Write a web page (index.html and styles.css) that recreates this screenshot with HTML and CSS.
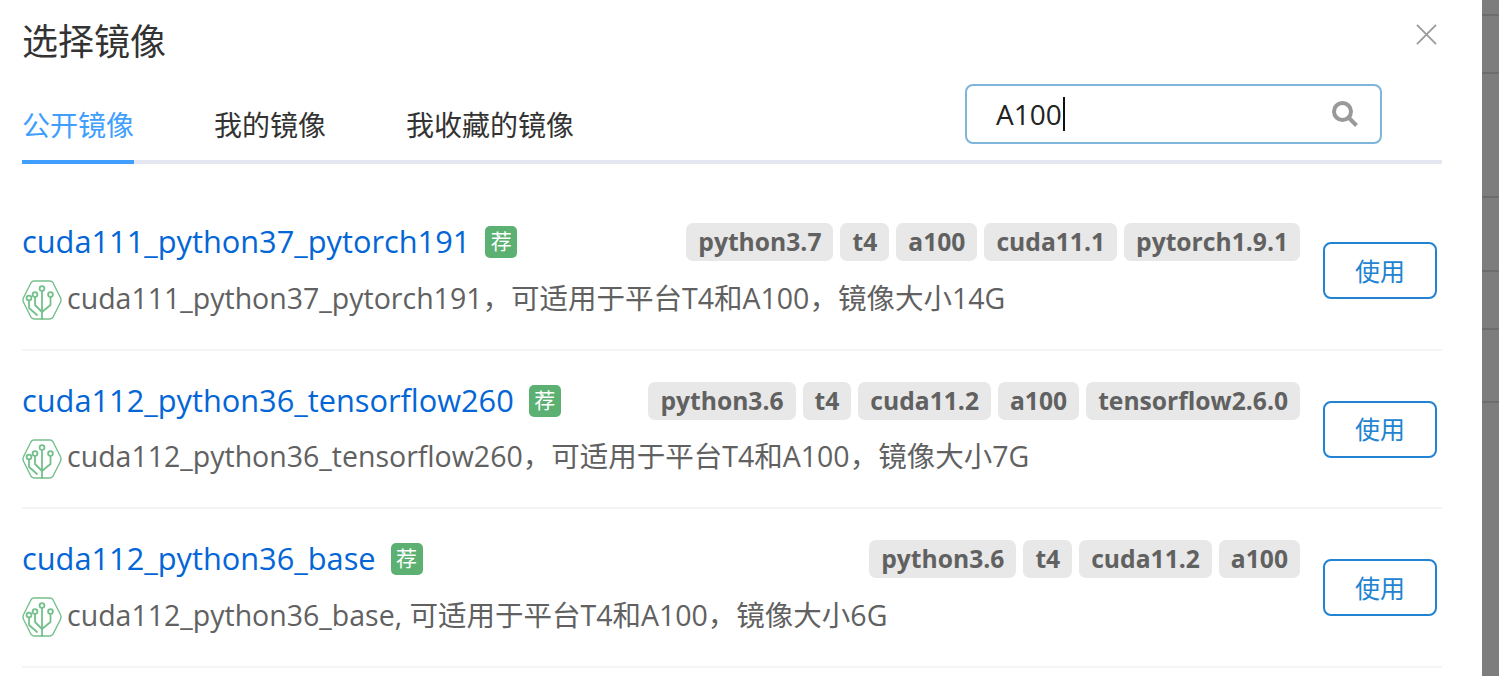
FILE: index.html
```html
<!DOCTYPE html>
<html lang="zh">
<head>
<meta charset="utf-8">
<title>选择镜像</title>
<link rel="stylesheet" href="styles.css">
</head>
<body>
<div class="page">
  <main class="dialog">
    <header class="head">
      <h1 class="title">选择镜像</h1>
      <svg class="close" viewBox="0 0 22 22" aria-label="关闭"><path d="M1 1 21 21M21 1 1 21"/></svg>
    </header>
    <div class="tabbar">
      <a class="tab tab-active">公开镜像</a>
      <a class="tab">我的镜像</a>
      <a class="tab">我收藏的镜像</a>
      <div class="search">
        <span class="search-text">A100</span><span class="caret"></span>
        <svg class="search-icon" viewBox="0 0 28 28"><circle cx="11.5" cy="11.5" r="8.5"/><path d="M18 18 25.5 25.5"/></svg>
      </div>
    </div>
    <section class="list">
      <article class="row">
        <div class="info">
          <div class="line-top">
            <a class="name">cuda111_python37_pytorch191</a><span class="rec">荐</span>
            <div class="tags"><span class="tag">python3.7</span><span class="tag">t4</span><span class="tag">a100</span><span class="tag">cuda11.1</span><span class="tag">pytorch1.9.1</span></div>
          </div>
          <div class="line-desc">
            <svg class="logo" viewBox="0 0 40 42"><use href="#nv"/></svg>
            <span class="desc">cuda111_python37_pytorch191，可适用于平台T4和A100，镜像大小14G</span>
          </div>
        </div>
        <button class="use">使用</button>
      </article>
      <article class="row">
        <div class="info">
          <div class="line-top">
            <a class="name">cuda112_python36_tensorflow260</a><span class="rec">荐</span>
            <div class="tags"><span class="tag">python3.6</span><span class="tag">t4</span><span class="tag">cuda11.2</span><span class="tag">a100</span><span class="tag">tensorflow2.6.0</span></div>
          </div>
          <div class="line-desc">
            <svg class="logo" viewBox="0 0 40 42"><use href="#nv"/></svg>
            <span class="desc">cuda112_python36_tensorflow260，可适用于平台T4和A100，镜像大小7G</span>
          </div>
        </div>
        <button class="use">使用</button>
      </article>
      <article class="row">
        <div class="info">
          <div class="line-top">
            <a class="name">cuda112_python36_base</a><span class="rec">荐</span>
            <div class="tags"><span class="tag">python3.6</span><span class="tag">t4</span><span class="tag">cuda11.2</span><span class="tag">a100</span></div>
          </div>
          <div class="line-desc">
            <svg class="logo" viewBox="0 0 40 42"><use href="#nv"/></svg>
            <span class="desc">cuda112_python36_base, 可适用于平台T4和A100，镜像大小6G</span>
          </div>
        </div>
        <button class="use">使用</button>
      </article>
    </section>
  </main>
  <aside class="backdrop">
    <i class="mark m1"></i><i class="mark m2"></i><i class="mark m3"></i><i class="mark m4"></i><i class="mark m5"></i><i class="mark m6"></i>
  </aside>
</div>
<svg class="defs" width="0" height="0">
  <defs>
    <g id="nv" fill="none" stroke="#74c08c" stroke-width="1.8" stroke-linecap="round" stroke-linejoin="round">
      <path d="M12 2H28Q30 2 31 3.8L38.4 18.5Q39.6 21 38.4 23.5L31 38.2Q30 40 28 40H12Q10 40 9 38.2L1.6 23.5Q.4 21 1.6 18.5L9 3.8Q10 2 12 2Z" stroke-width="1.4"/>
      <path d="M20 40V12"/>
      <path d="M20 33 13 26V18"/>
      <path d="M20 33 28.5 26V18"/>
      <path d="M15 36 7 29V21.5"/>
      <circle cx="20" cy="9.5" r="2.4"/>
      <circle cx="13" cy="15.5" r="2.4"/>
      <circle cx="7" cy="19" r="2.4"/>
      <circle cx="28.5" cy="15.5" r="2.4"/>
    </g>
  </defs>
</svg>
</body>
</html>
```
FILE: styles.css
```css
* { box-sizing: border-box; }
html, body { margin: 0; height: 100%; overflow: hidden; }
body {
  font-family: "Open Sans", "Noto Sans CJK SC", sans-serif;
  background: #fff;
  color: #333;
}
.page { display: flex; height: 676px; }
.dialog { width: 1482px; padding: 0 40px 0 22px; flex: none; }
.backdrop { flex: 1; background: #7d7d7d; position: relative; }
.mark { position: absolute; left: 0; right: 0; height: 2px; background: #6d6d6d; }
.m1 { top: 14px; } .m2 { top: 72px; } .m3 { top: 196px; }
.m4 { top: 270px; } .m5 { top: 328px; } .m6 { top: 401px; }
.defs { position: absolute; }

.head { display: flex; justify-content: space-between; align-items: flex-start; height: 84px; padding-top: 18px; }
.title { margin: 0; font-size: 36px; line-height: 48px; font-weight: 400; color: #333; }
.close { width: 21px; height: 21px; margin: 6px 5px 0 0; fill: none; stroke: #999; stroke-width: 1.8; }

.tabbar { display: flex; height: 80px; border-bottom: 4px solid #e4e7f1; position: relative; }
.tab { width: 112px; margin-right: 80px; padding-top: 20px; height: 80px; font-size: 28px; line-height: 42px; color: #333; white-space: nowrap; }
.tab:nth-child(3) { width: 168px; }
.tab-active { color: #409eff; border-bottom: 4px solid #409eff; }
.search {
  position: absolute; left: 943px; top: 0;
  width: 417px; height: 60px; border: 2px solid #7fb5da; border-radius: 8px;
  display: flex; align-items: center; padding-left: 29px;
  font-size: 28px; color: #222;
}
.search-text { line-height: 40px; }
.caret { width: 2px; height: 34px; background: #111; margin-left: 1px; }
.search-icon { width: 28px; height: 28px; margin-left: auto; margin-right: 21px; fill: none; stroke: #999; stroke-width: 4; }

.list { padding-top: 28px; }
.row { display: flex; height: 158.5px; border-bottom: 2px solid #f4f4f4; padding: 31px 5px 0 0; }
.info { flex: 1; min-width: 0; }
.line-top { display: flex; align-items: center; height: 38px; }
.name { font-size: 30.75px; line-height: 36px; color: #0366d6; white-space: nowrap; margin-bottom: 2px; }
.rec {
  width: 32px; height: 32px; margin-left: 15px; border-radius: 5px;
  background: #5bb072; color: #fff; font-size: 21px; line-height: 30px; text-align: center;
}
.tags { margin-left: auto; display: flex; gap: 7px; }
.tag {
  height: 38px; padding: 0 12px; border-radius: 7px;
  background: #e8e8e8; color: #616161;
  font-size: 24.65px; font-weight: 700; line-height: 38px; white-space: nowrap;
}
.line-desc { display: flex; align-items: center; margin-top: 18px; height: 42px; }
.logo { width: 40px; height: 42px; flex: none; }
.desc { margin: 0 0 5px 5px; font-size: 28.5px; color: #616161; white-space: nowrap; line-height: 40px; }
.use {
  width: 114px; height: 57px; margin: 19px 0 0 23px; flex: none;
  background: #fff; border: 2px solid #2183d1; border-radius: 8px;
  color: #2183d1; font: inherit; font-size: 25px; padding: 0 0 2px;
}
```
